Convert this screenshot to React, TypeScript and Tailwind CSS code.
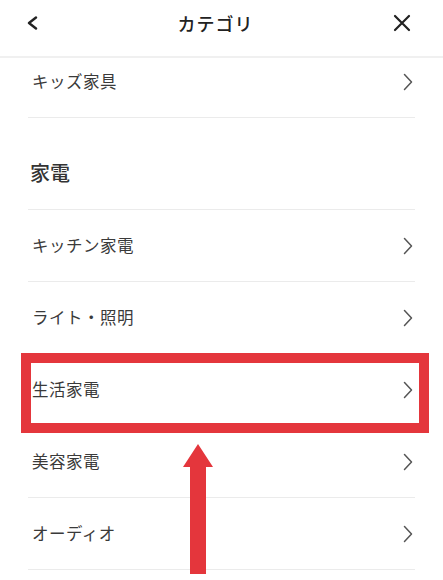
import React from "react";

const font = { fontFamily: '"Noto Sans CJK JP", "Noto Sans", sans-serif' };

function Chevron() {
  return (
    <svg width="10" height="18" viewBox="0 0 10 18" fill="none">
      <path d="M1.5 1.5 L8.5 9 L1.5 16.5" stroke="#555" strokeWidth="1.5" strokeLinecap="round" strokeLinejoin="round" />
    </svg>
  );
}

function Row({ label }: { label: string }) {
  return (
    <div className="mx-[28px] h-[72px] flex items-center justify-between border-b border-[#ebebeb] pl-[4px] pr-[2px]">
      <span className="text-[16.5px] text-[#3a3a3a] tracking-[0.5px]">{label}</span>
      <Chevron />
    </div>
  );
}

export default function App() {
  return (
    <div className="relative w-[443px] h-[580px] overflow-hidden bg-white" style={font}>
      <div className="h-[58px] border-b-2 border-[#f0f0f0] relative z-10 bg-white">
        <div className="h-[46px] flex items-center justify-between pl-[26px] pr-[32px]">
          <svg width="12" height="14" viewBox="0 0 12 14" fill="none">
            <path d="M10 1.5 L3 7 L10 12.5" stroke="#222" strokeWidth="2.4" strokeLinecap="round" strokeLinejoin="round" />
          </svg>
          <span className="text-[18px] font-medium text-[#222] tracking-[1px]">カテゴリ</span>
          <svg width="18" height="18" viewBox="0 0 18 18" fill="none">
            <path d="M2 2 L16 16 M16 2 L2 16" stroke="#222" strokeWidth="2.2" strokeLinecap="round" />
          </svg>
        </div>
      </div>
      <div className="-mt-[12px]">
        <Row label="キッズ家具" />
        <div className="mx-[28px] h-[92px] flex items-center pt-[18px] border-b border-[#ebebeb] pl-[2px]">
          <span className="text-[20px] font-medium text-[#333]">家電</span>
        </div>
        <Row label="キッチン家電" />
        <Row label="ライト・照明" />
        <Row label="生活家電" />
        <Row label="美容家電" />
        <Row label="オーディオ" />
      </div>
      <div className="absolute left-[21px] top-[353px] w-[408px] h-[80px] border-[10px] border-[#e4363c]" />
      <svg className="absolute left-[182px] top-[444px]" width="32" height="132" viewBox="0 0 32 132">
        <polygon points="16,0 31,23 24,23 24,130 8,130 8,23 1,23" fill="#e4363c" />
      </svg>
    </div>
  );
}
